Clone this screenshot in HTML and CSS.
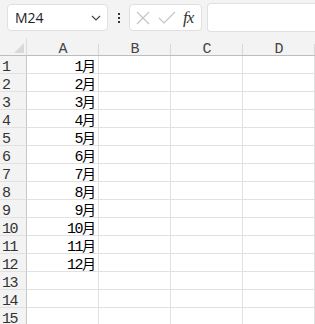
FILE: index.html
```html
<!DOCTYPE html>
<html lang="zh-CN">
<head>
    <meta charset="UTF-8">
    <title>Sheet</title>
    <link rel="stylesheet" href="styles.css">
</head>
<body>
    <div class="toolbar">
        <div class="name-box">
            <span>M24</span>
            <svg class="chevron" width="10" height="6" viewBox="0 0 10 6"><path d="M1 1l4 4 4-4" fill="none" stroke="#444" stroke-width="1.2"/></svg>
        </div>
        <div class="dots"><i></i><i></i><i></i></div>
        <div class="fx-box">
            <svg width="16" height="16" viewBox="0 0 16 16"><path d="M2 2l12 12M14 2L2 14" stroke="#c4c4c4" stroke-width="1.2"/></svg>
            <svg width="18" height="14" viewBox="0 0 18 14"><path d="M1 7l5 5L17 1" fill="none" stroke="#c4c4c4" stroke-width="1.2"/></svg>
            <span class="fx">fx</span>
        </div>
        <div class="formula"></div>
    </div>

    <div class="sheet">
        <div class="corner"><svg width="10" height="10" viewBox="0 0 10 10"><path d="M10 0V10H0Z" fill="#d9d9d9"/></svg></div>
        <div class="col-head">A</div>
        <div class="col-head">B</div>
        <div class="col-head">C</div>
        <div class="col-head">D</div>

        <div class="row-head">1</div><div class="cell num">1<span>月</span></div><div class="cell"></div><div class="cell"></div><div class="cell"></div>
        <div class="row-head">2</div><div class="cell num">2<span>月</span></div><div class="cell"></div><div class="cell"></div><div class="cell"></div>
        <div class="row-head">3</div><div class="cell num">3<span>月</span></div><div class="cell"></div><div class="cell"></div><div class="cell"></div>
        <div class="row-head">4</div><div class="cell num">4<span>月</span></div><div class="cell"></div><div class="cell"></div><div class="cell"></div>
        <div class="row-head">5</div><div class="cell num">5<span>月</span></div><div class="cell"></div><div class="cell"></div><div class="cell"></div>
        <div class="row-head">6</div><div class="cell num">6<span>月</span></div><div class="cell"></div><div class="cell"></div><div class="cell"></div>
        <div class="row-head">7</div><div class="cell num">7<span>月</span></div><div class="cell"></div><div class="cell"></div><div class="cell"></div>
        <div class="row-head">8</div><div class="cell num">8<span>月</span></div><div class="cell"></div><div class="cell"></div><div class="cell"></div>
        <div class="row-head">9</div><div class="cell num">9<span>月</span></div><div class="cell"></div><div class="cell"></div><div class="cell"></div>
        <div class="row-head">10</div><div class="cell num">10<span>月</span></div><div class="cell"></div><div class="cell"></div><div class="cell"></div>
        <div class="row-head">11</div><div class="cell num">11<span>月</span></div><div class="cell"></div><div class="cell"></div><div class="cell"></div>
        <div class="row-head">12</div><div class="cell num">12<span>月</span></div><div class="cell"></div><div class="cell"></div><div class="cell"></div>
        <div class="row-head">13</div><div class="cell"></div><div class="cell"></div><div class="cell"></div><div class="cell"></div>
        <div class="row-head">14</div><div class="cell"></div><div class="cell"></div><div class="cell"></div><div class="cell"></div>
        <div class="row-head">15</div><div class="cell"></div><div class="cell"></div><div class="cell"></div><div class="cell"></div>
    </div>
</body>
</html>
```

FILE: styles.css
```css
body {
    margin: 0;
    width: 315px;
    height: 324px;
    overflow: hidden;
    background: #fff;
    font-family: 'Liberation Mono', 'Noto Sans CJK SC', monospace;
}
.toolbar {
    display: flex;
    align-items: center;
    height: 38px;
    padding: 0 0 3px 7px;
    box-sizing: border-box;
    background: #f3f3f3;
}
.name-box {
    display: flex;
    align-items: center;
    justify-content: space-between;
    width: 101px;
    height: 27px;
    box-sizing: border-box;
    padding: 0 6px 0 7px;
    background: #fff;
    border: 1px solid #e0e0e0;
    border-radius: 4px;
    font-family: 'Open Sans', 'Noto Sans', sans-serif;
    font-size: 14px;
    color: #222;
}
.dots {
    display: flex;
    flex-direction: column;
    gap: 2px;
    width: 21px;
    align-items: center;
}
.dots i {
    width: 2px;
    height: 2px;
    background: #333;
}
.fx-box {
    display: flex;
    align-items: center;
    gap: 7px;
    width: 73px;
    height: 27px;
    box-sizing: border-box;
    padding-left: 5px;
    background: #fff;
    border: 1px solid #e0e0e0;
    border-radius: 4px;
}
.fx {
    font-family: 'Liberation Serif', serif;
    font-style: italic;
    font-size: 17px;
    color: #333;
    letter-spacing: -1px;
}
.formula {
    flex: 1;
    height: 27px;
    margin-left: 5px;
    background: #fff;
    border: 1px solid #e0e0e0;
    border-right: none;
    border-radius: 4px 0 0 4px;
}
.sheet {
    display: grid;
    grid-template-columns: 27px repeat(4, 72px);
    grid-auto-rows: 18px;
    font-size: 15px;
}
.sheet > div {
    box-sizing: border-box;
    padding-top: 5px;
    line-height: 13px;
    white-space: nowrap;
}
.sheet > .corner {
    display: flex;
    align-items: flex-end;
    justify-content: flex-end;
    padding: 0 2px 2px 0;
    background: #f3f3f3;
    border-bottom: 1px solid #bdbdbd;
    border-right: 1px solid #dcdcdc;
}
.col-head {
    background: #f3f3f3 linear-gradient(#d8d8d8, #d8d8d8) right bottom / 1px 11px no-repeat;
    border-bottom: 1px solid #bdbdbd;
    text-align: center;
    color: #444;
}
.sheet > .row-head {
    background: #f3f3f3;
    border-right: 1px solid #c8c8c8;
    border-bottom: 1px solid #e1e1e1;
    padding-left: 2px;
    letter-spacing: -1.5px;
    color: #333;
}
.cell {
    border-right: 1px solid #e1e1e1;
    border-bottom: 1px solid #e1e1e1;
    color: #000;
}
.sheet > .num {
    text-align: right;
    padding-right: 2px;
    letter-spacing: -1.5px;
}
.num span {
    font-size: 14px;
    letter-spacing: 0;
}
```
